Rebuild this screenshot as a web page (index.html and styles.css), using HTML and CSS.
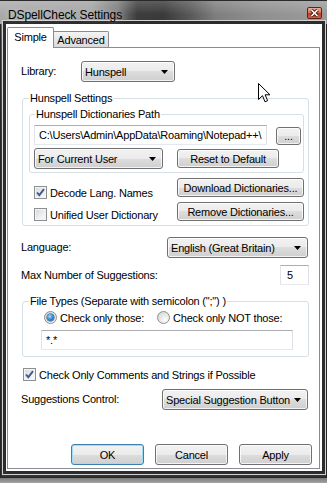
FILE: index.html
```html
<!DOCTYPE html>
<html lang="en">
<head>
  <meta charset="UTF-8">
  <meta name="viewport" content="width=device-width, initial-scale=1.0">
  <title>DSpellCheck Settings</title>
  <link rel="stylesheet" href="styles.css">
</head>
<body>
  <div class="window">
    <div class="titlebar">
      <span class="title">DSpellCheck Settings</span>
      <span class="close-btn">
        <svg width="13" height="10" viewBox="0 0 13 10">
          <path d="M3.5 2 L9.5 8 M9.5 2 L3.5 8" stroke="#4a1a10" stroke-width="3.4" fill="none"/>
          <path d="M3.5 2 L9.5 8 M9.5 2 L3.5 8" stroke="#ffffff" stroke-width="1.6" fill="none"/>
        </svg>
      </span>
    </div>

    <div class="client">
      <div class="tabs">
        <div class="tab tab-active">Simple</div>
        <div class="tab">Advanced</div>
      </div>

      <div class="panel">
        <div class="form-row row-library">
          <span class="label">Library:</span>
          <div class="combo combo-library">
            <span class="combo-text">Hunspell</span>
            <svg class="arrow" width="7" height="4" viewBox="0 0 7 4"><path d="M0 0 H7 L3.5 4 Z"/></svg>
          </div>
        </div>

        <fieldset class="group group-hunspell">
          <legend>Hunspell Settings</legend>

          <fieldset class="group group-path">
            <legend>Hunspell Dictionaries Path</legend>
            <div class="path-row">
              <div class="edit edit-path">C:\Users\Admin\AppData\Roaming\Notepad++\</div>
              <button class="btn btn-browse">...</button>
            </div>
            <div class="user-row">
              <div class="combo combo-user">
                <span class="combo-text">For Current User</span>
                <svg class="arrow" width="7" height="4" viewBox="0 0 7 4"><path d="M0 0 H7 L3.5 4 Z"/></svg>
              </div>
              <button class="btn btn-reset">Reset to Default</button>
            </div>
          </fieldset>

          <div class="dict-row">
            <div class="checks">
              <label class="check">
                <span class="box">
                  <svg width="11" height="11" viewBox="0 0 11 11"><path d="M2 5.5 L4.3 8.2 L9 2.2" stroke="#3f5a8e" stroke-width="1.9" fill="none"/></svg>
                </span>
                Decode Lang. Names
              </label>
              <label class="check">
                <span class="box"></span>
                Unified User Dictionary
              </label>
            </div>
            <div class="dict-buttons">
              <button class="btn btn-dict">Download Dictionaries...</button>
              <button class="btn btn-dict">Remove Dictionaries...</button>
            </div>
          </div>
        </fieldset>

        <div class="form-row row-language">
          <span class="label">Language:</span>
          <div class="combo combo-language">
            <span class="combo-text">English (Great Britain)</span>
            <svg class="arrow" width="7" height="4" viewBox="0 0 7 4"><path d="M0 0 H7 L3.5 4 Z"/></svg>
          </div>
        </div>

        <div class="form-row row-max">
          <span class="label">Max Number of Suggestions:</span>
          <div class="edit edit-max">5</div>
        </div>

        <fieldset class="group group-files">
          <legend>File Types (Separate with semicolon (";") )</legend>
          <div class="radios">
            <label class="radio-item radio-first"><span class="radio radio-on"></span>Check only those:</label>
            <label class="radio-item"><span class="radio"></span>Check only NOT those:</label>
          </div>
          <div class="edit edit-files">*.*</div>
        </fieldset>

        <label class="check check-comments">
          <span class="box">
            <svg width="11" height="11" viewBox="0 0 11 11"><path d="M2 5.5 L4.3 8.2 L9 2.2" stroke="#3f5a8e" stroke-width="1.9" fill="none"/></svg>
          </span>
          Check Only Comments and Strings if Possible
        </label>

        <div class="form-row row-suggestions">
          <span class="label">Suggestions Control:</span>
          <div class="combo combo-suggestions">
            <span class="combo-text">Special Suggestion Button</span>
            <svg class="arrow" width="7" height="4" viewBox="0 0 7 4"><path d="M0 0 H7 L3.5 4 Z"/></svg>
          </div>
        </div>

        <div class="dialog-buttons">
          <button class="btn btn-dialog btn-default">OK</button>
          <button class="btn btn-dialog">Cancel</button>
          <button class="btn btn-dialog">Apply</button>
        </div>
      </div>
    </div>

    <svg class="cursor" width="13" height="20" viewBox="0 0 13 20">
      <path d="M0.5 0.5 V16.5 L4.5 12.7 L7 18.8 L9.6 17.7 L7.1 11.8 H12 Z" fill="#ffffff" stroke="#000000" stroke-width="1" stroke-linejoin="miter"/>
    </svg>
  </div>
</body>
</html>
```

FILE: styles.css
```css
* {
  box-sizing: border-box;
}

body {
  margin: 0;
  height: 483px;
  overflow: hidden;
  background: linear-gradient(#7a7a7a 478px, #a4a4a4 483px);
  font-family: "Liberation Sans", Arial, sans-serif;
  font-size: 11px;
  letter-spacing: -0.2px;
  color: #000;
}

.window {
  position: relative;
  width: 327px;
  height: 478px;
  padding: 0 5px 7px 6px;
  background: linear-gradient(#8a8a8a 0, #5a5a5a 40px, #383838 140px, #333 100%);
  box-shadow: inset 0 0 0 1px #262626;
}

.titlebar {
  display: flex;
  align-items: flex-start;
  justify-content: space-between;
  height: 24px;
  margin: 0 -5px 0 -6px;
  padding: 7px 5px 0 8px;
  background:
    linear-gradient(rgba(255, 255, 255, 0.18), rgba(255, 255, 255, 0) 60%),
    linear-gradient(to right, #aaaaaa 0%, #a4a4a4 28%, #7c7c7c 36%, #3c3c3c 42%, #3a3a3a 50%, #585858 58%, #7e7e7e 66%, #909090 80%, #9c9c9c 100%);
  border-top: 1px solid #2a2a2a;
}

.title {
  font-size: 12px;
  line-height: 14px;
  letter-spacing: -0.1px;
  color: #000;
  text-shadow: 0 0 6px rgba(255, 255, 255, 0.5);
}

.close-btn {
  display: flex;
  align-items: center;
  justify-content: center;
  width: 15px;
  height: 12px;
  margin-top: -1px;
  border: 1px solid #5e2418;
  border-radius: 2px;
  background: linear-gradient(#eab0a0 0%, #d8735a 45%, #c23c20 55%, #d4603f 100%);
}

.client {
  display: flex;
  flex-direction: column;
  height: 447px;
  padding: 3px 2px 0 1px;
  background: #fff;
  box-shadow: 0 0 0 3px #2c2c2c, 0 0 0 4px #d2d2d2;
}

/* tabs */

.tabs {
  display: flex;
  align-items: flex-end;
  height: 20px;
}

.tab {
  display: flex;
  align-items: center;
  justify-content: center;
  height: 16px;
  width: 55px;
  border: 1px solid #898c95;
  border-left: none;
  border-bottom: none;
  border-radius: 0 2px 0 0;
  background: linear-gradient(#f4f4f4, #e6e6e6 50%, #dadada);
}

.tab-active {
  position: relative;
  width: 47px;
  height: 21px;
  margin-bottom: -1px;
  padding-bottom: 2px;
  border-left: 1px solid #898c95;
  border-radius: 2px 2px 0 0;
  background: #fff;
}

.panel {
  display: flex;
  flex-direction: column;
  height: 422px;
  padding: 13px 10px 3px 13px;
  border: 1px solid #898c95;
}

/* form rows */

.form-row {
  display: flex;
  align-items: center;
  justify-content: space-between;
}

.label {
  line-height: 13px;
}

.row-library {
  justify-content: flex-start;
}

.row-library .label {
  width: 60px;
}

.row-language {
  margin-top: 11px;
}

.row-max {
  margin-top: 7px;
}

.row-suggestions {
  margin-top: 8px;
}

/* controls */

.combo {
  display: flex;
  align-items: center;
  height: 21px;
  padding: 0 6px 0 3px;
  border: 1px solid #707070;
  border-radius: 3px;
  background: linear-gradient(#f2f2f2 0%, #ebebeb 50%, #dddddd 50%, #cfcfcf 100%);
  box-shadow: inset 0 0 0 1px rgba(255, 255, 255, 0.75);
  white-space: nowrap;
}

.combo-text {
  flex: 1;
}

.arrow {
  flex: none;
  fill: #000;
}

.combo-library {
  width: 94px;
}

.combo-user {
  width: 129px;
}

.combo-language {
  width: 141px;
  margin-right: 1px;
}

.combo-suggestions {
  width: 146px;
  margin-right: 1px;
}

.btn {
  height: 19px;
  padding: 0;
  border: 1px solid #707070;
  border-radius: 3px;
  background: linear-gradient(#f2f2f2 0%, #ebebeb 50%, #dddddd 50%, #cfcfcf 100%);
  box-shadow: inset 0 0 0 1px rgba(255, 255, 255, 0.75);
  font: inherit;
  letter-spacing: inherit;
  color: #000;
  white-space: nowrap;
}

.edit {
  height: 20px;
  padding: 0 3px;
  border: 1px solid;
  border-color: #abadb3 #dbdfe6 #e3e9ef #e2e3ea;
  background: #fff;
  line-height: 18px;
  white-space: nowrap;
  overflow: hidden;
}

/* group boxes */

.group {
  min-width: 0;
  margin: 0;
  border: 1px solid #d5dfe5;
  border-radius: 3px;
}

.group legend {
  padding: 0 1px;
  line-height: 13px;
}

.group-hunspell {
  margin: 10px 0 0 1px;
  padding: 3px 4px 4px 6px;
}

.group-path {
  padding: 4px 2px 3px 4px;
}

.group-path legend {
  margin-left: 1px;
}

.path-row {
  display: flex;
  align-items: flex-end;
}

.edit-path {
  width: 233px;
  padding-left: 4px;
}

.btn-browse {
  width: 25px;
  height: 18px;
  margin-left: 9px;
  line-height: 10px;
}

.user-row {
  display: flex;
  align-items: center;
  margin-top: 3px;
}

.btn-reset {
  width: 102px;
  margin-left: 14px;
}

.dict-row {
  display: flex;
  margin-top: 5px;
}

.checks {
  display: flex;
  flex-direction: column;
  gap: 9px;
  padding-top: 8px;
  margin-left: 5px;
}

.dict-buttons {
  display: flex;
  flex-direction: column;
  gap: 5px;
  margin-left: auto;
}

.btn-dict {
  width: 127px;
}

/* checkboxes and radios */

.check {
  display: flex;
  align-items: center;
  gap: 3px;
  height: 13px;
}

.box {
  display: flex;
  align-items: center;
  justify-content: center;
  width: 13px;
  height: 13px;
  border: 1px solid #8e8f8f;
  background: linear-gradient(135deg, #d3d6da 0%, #eceef0 55%, #fbfbfb 100%);
  box-shadow: inset 0 0 0 1px #f4f4f4;
}

.check-comments {
  margin: 11px 0 0 2px;
}

.group-files {
  margin: 10px 0 0 1px;
  padding: 3px 15px 6px 6px;
}

.radios {
  display: flex;
  margin-left: 15px;
}

.radio-item {
  display: flex;
  align-items: center;
  gap: 3px;
  height: 13px;
}

.radio-first {
  width: 113px;
}

.radio {
  position: relative;
  width: 13px;
  height: 13px;
  border: 1px solid #8e8f8f;
  border-radius: 50%;
  background: radial-gradient(circle at 65% 70%, #fdfdfd 0%, #e6e6e6 50%, #cfcfcf 100%);
}

.radio-on::after {
  content: "";
  position: absolute;
  left: 2px;
  top: 2px;
  width: 7px;
  height: 7px;
  border-radius: 50%;
  background: radial-gradient(circle at 40% 35%, #a8e0fa 0%, #3a8ed0 45%, #124e92 100%);
  box-shadow: 0 0 0 0.5px #1b4a7a;
}

.edit-files {
  width: 252px;
  margin: 6px 0 0 12px;
  padding-left: 4px;
}

.edit-max {
  width: 29px;
  padding-left: 6px;
}

/* dialog buttons */

.dialog-buttons {
  display: flex;
  justify-content: flex-end;
  gap: 11px;
  margin-top: auto;
  margin-right: -3px;
}

.btn-dialog {
  width: 73px;
  height: 21px;
}

.btn-default {
  border-color: #3c7fb1;
  box-shadow: inset 0 0 0 1px #9fdcf6;
}

.cursor {
  position: absolute;
  left: 258px;
  top: 83px;
}
```
